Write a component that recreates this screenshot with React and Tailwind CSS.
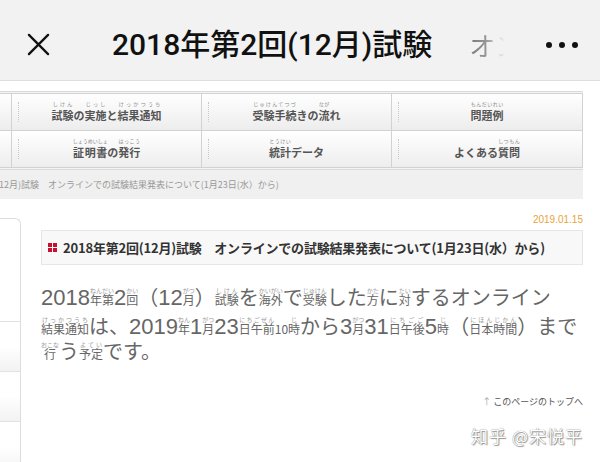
import React from 'react';

// ruby-annotated kanji (rendered smaller than the kana around it)
function R({ b, r }) {
  return (
    <ruby className="text-[12px]">
      {b}
      <rt className="text-[6px] text-[#999]">{r}</rt>
    </ruby>
  );
}

function N({ children }) {
  return <span className="text-[22px] font-['Liberation_Sans',sans-serif]">{children}</span>;
}

function NavCell({ children }) {
  return (
    <div className="relative flex items-end justify-center pb-[8px] border-r border-b border-[#d2d2d2] bg-gradient-to-b from-white to-[#ededed]">
      <span className="absolute left-[6px] top-[8px] bottom-[8px] border-l border-dotted border-[#c8c8c8]" />
      <span className="text-[11px] font-bold text-[#555] leading-[14px]">{children}</span>
    </div>
  );
}

function NR({ b, r }) {
  return (
    <ruby>
      {b}
      <rt className="text-[5px] pb-[3px] font-normal text-[#888]">{r}</rt>
    </ruby>
  );
}

export default function App() {
  return (
    <div className="w-[600px] h-[462px] overflow-hidden bg-white font-['Noto_Sans_CJK_JP',sans-serif]">
      {/* top bar */}
      <header className="h-[81px] pt-[9px] bg-[#f2f2f2] border-b border-[#dedede] flex items-center">
        <svg className="ml-[27px] w-[23px] h-[23px]" viewBox="0 0 24 24" fill="none" stroke="#111" strokeWidth="2.4" strokeLinecap="round">
          <path d="M2 2 L22 22 M22 2 L2 22" />
        </svg>
        <h1 className="ml-[62px] text-[30px] font-medium text-[#111] whitespace-nowrap font-['Roboto','Noto_Sans_CJK_JP',sans-serif]">
          2018年第2回(12月)試験
        </h1>
        <span className="ml-[37px] w-[36px] overflow-hidden whitespace-nowrap text-[26px] bg-gradient-to-r from-[#777] via-[#999] to-transparent bg-clip-text text-transparent">
          オン
        </span>
        <div className="ml-auto mr-[22px] flex gap-[7px]">
          <span className="w-[6px] h-[6px] rounded-full bg-[#111]" />
          <span className="w-[6px] h-[6px] rounded-full bg-[#111]" />
          <span className="w-[6px] h-[6px] rounded-full bg-[#111]" />
        </div>
      </header>

      <div className="w-[583px]">
        {/* nav grid */}
        <div className="mt-[10px] border-y border-[#dadada] bg-[#f4f4f4] py-[1px]">
          <div className="grid grid-cols-[12px_190px_190px_1fr] grid-rows-[37px_37px] border-t border-[#d2d2d2]">
            <div className="border-r border-b border-[#d2d2d2] bg-gradient-to-b from-white to-[#ededed]" />
            <NavCell>
              <NR b="試験" r="しけん" />の<NR b="実施" r="じっし" />と<NR b="結果通知" r="けっかつうち" />
            </NavCell>
            <NavCell>
              <NR b="受験手続" r="じゅけんてつづ" />きの<NR b="流" r="なが" />れ
            </NavCell>
            <NavCell>
              <NR b="問題例" r="もんだいれい" />
            </NavCell>
            <div className="border-r border-b border-[#d2d2d2] bg-gradient-to-b from-white to-[#ededed]" />
            <NavCell>
              <NR b="証明書" r="しょうめいしょ" />の<NR b="発行" r="はっこう" />
            </NavCell>
            <NavCell>
              <NR b="統計" r="とうけい" />データ
            </NavCell>
            <NavCell>
              よくある<NR b="質問" r="しつもん" />
            </NavCell>
          </div>
        </div>

        {/* breadcrumb */}
        <div className="h-[29px] bg-[#f0f0f0] flex items-center">
          <span className="-ml-[4px] text-[9px] text-[#999] whitespace-nowrap">
            (12月)試験　オンラインでの試験結果発表について(1月23日(水）から)
          </span>
        </div>

        {/* body */}
        <div className="flex items-start mt-[14px]">
          <aside className="mt-[5px] w-[21px] shrink-0 border-r border-t border-[#dddddd] rounded-tr-[6px]">
            <div className="h-[103px] border-b border-[#e2e2e2]" />
            <div className="h-[50px] border-b border-[#e2e2e2] bg-gradient-to-b from-white via-white to-[#f2f2f2]" />
            <div className="h-[50px] border-b border-[#e2e2e2] bg-gradient-to-b from-white via-white to-[#f2f2f2]" />
            <div className="h-[50px] bg-gradient-to-b from-white via-white to-[#f2f2f2]" />
          </aside>

          <main className="ml-[20px] flex-1">
            <div className="h-[14px] leading-[14px] text-right text-[10px] text-[#e7a43c] font-['Liberation_Sans',sans-serif]">
              2019.01.15
            </div>
            <div className="mt-[3px] h-[35px] bg-[#f8f8f8] border border-[#e6e6e6] flex items-center pl-[6px]">
              <span className="grid grid-cols-2 gap-[1px] w-[9px] h-[9px] mr-[6px]">
                <span className="bg-[#c8102e]" />
                <span className="bg-[#c8102e]" />
                <span className="bg-[#c8102e]" />
                <span className="bg-[#c8102e]" />
              </span>
              <span className="text-[13px] font-bold text-[#333] tracking-[-0.2px] whitespace-nowrap">
                2018年第2回(12月)試験　オンラインでの試験結果発表について(1月23日(水）から)
              </span>
            </div>

            <div className="mt-[18px] text-[20px] text-[#666] whitespace-nowrap">
              <div className="h-[28px] leading-[28px]">
                <N>2018</N><R b="年" r="ねん" /><R b="第" r="だい" /><N>2</N><R b="回" r="かい" />（<N>12</N><R b="月" r="がつ" />）<R b="試験" r="しけん" />を<R b="海外" r="かいがい" />で<R b="受験" r="じゅけん" />した<R b="方" r="かた" />に<R b="対" r="たい" />するオンライン
              </div>
              <div className="mt-[1px] h-[28px] leading-[28px]">
                <R b="結果通知" r="けっかつうち" />は、<N>2019</N><R b="年" r="ねん" /><N>1</N><R b="月" r="がつ" /><N>23</N><R b="日午前" r="にちごぜん" /><span className="text-[12px]">10</span><R b="時" r="じ" />から<N>3</N><R b="月" r="がつ" /><N>31</N><R b="日午後" r="にちごご" /><N>5</N><R b="時" r="じ" />（<R b="日本時間" r="にほんじかん" />）まで
              </div>
              <div className="-mt-[3px] h-[28px] leading-[28px]">
                <R b="行" r="おこな" />う<R b="予定" r="よてい" />です。
              </div>
            </div>

            <div className="mt-[31px] h-[12px] flex items-center justify-end gap-[2px] text-[9px] text-[#555]">
              <span className="text-[#aaa]">↑</span>
              <span>このページのトップへ</span>
            </div>

            <div className="mt-[16px] leading-[24px] text-right text-[17px] text-white tracking-[1px] [text-shadow:0_0_1px_#666,1px_1px_1px_#999]">
              知乎 @宋悦平
            </div>
          </main>
        </div>
      </div>
    </div>
  );
}
